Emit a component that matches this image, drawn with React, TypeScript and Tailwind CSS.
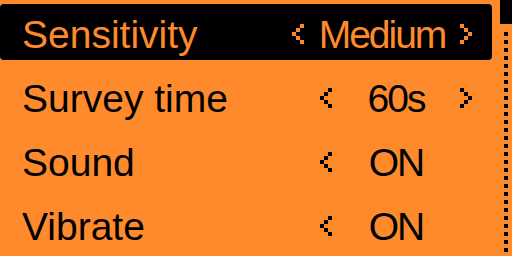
const items = [
  { label: 'Sensitivity', value: 'Medium', selected: true, right: true },
  { label: 'Survey time', value: '60s', selected: false, right: true },
  { label: 'Sound', value: 'ON', selected: false, right: false },
  { label: 'Vibrate', value: 'ON', selected: false, right: false },
];

function Arrow({ dir }: { dir: 'left' | 'right' }) {
  // 3x5 pixel chevron, one screen pixel = 4px
  const px = dir === 'left' ? [2, 1, 0, 1, 2] : [0, 1, 2, 1, 0];
  return (
    <svg width="12" height="20" viewBox="0 0 12 20" className="shrink-0 fill-current -mt-[2px]">
      {px.map((x, i) => (
        <rect key={i} x={x * 4} y={i * 4} width="4" height="4" />
      ))}
    </svg>
  );
}

export default function App() {
  return (
    <div className="w-[512px] h-[256px] bg-[#ff8a2c] flex overflow-hidden text-black font-['Liberation_Sans',Arial,sans-serif]">
      <div className="w-[492px] flex flex-col">
        {items.map((it) => {
          const wide = it.value.length > 4;
          return (
            <div key={it.label} className="h-16 py-1">
              <div
                className={
                  'h-14 flex items-center pl-[22px] pr-[20px] pt-[6px] rounded-[4px] text-[39px] leading-[50px] ' +
                  (it.selected ? 'bg-black text-[#ff8a2c]' : '')
                }
              >
                <span className="flex-1 whitespace-nowrap">{it.label}</span>
                <div className="flex items-center">
                  <Arrow dir="left" />
                  <span
                    className={
                      'text-center whitespace-nowrap tracking-[-2px] ' + (wide ? 'w-[156px]' : 'w-[128px]')
                    }
                  >
                    {it.value}
                  </span>
                  {it.right ? <Arrow dir="right" /> : <span className="w-[12px]" />}
                </div>
              </div>
            </div>
          );
        })}
      </div>
      <div className="flex-1 flex flex-col">
        <div className="ml-[8px] w-[12px] h-[24px] bg-black" />
        <div className="ml-[12px] mt-[8px] flex flex-col gap-[4px]">
          {Array.from({ length: 28 }).map((_, i) => (
            <div key={i} className="w-[4px] h-[4px] bg-black" />
          ))}
        </div>
      </div>
    </div>
  );
}
